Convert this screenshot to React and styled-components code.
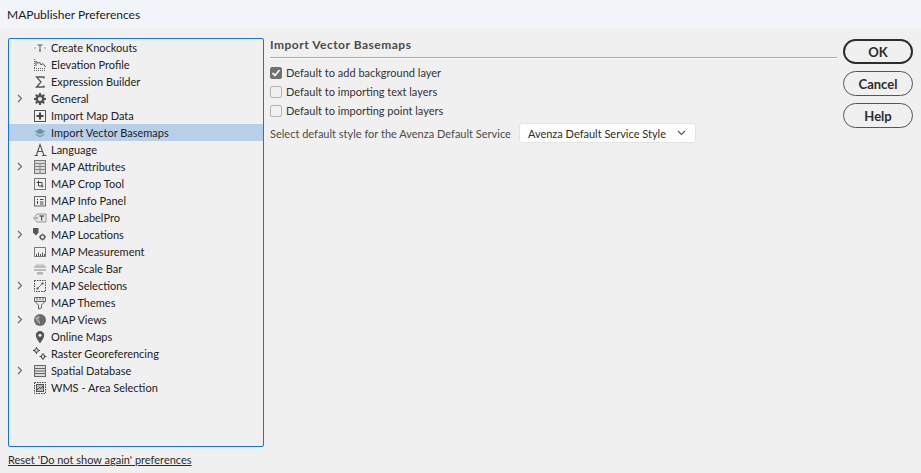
import React from "react"
import styled, { createGlobalStyle } from "styled-components"

const GlobalStyle = createGlobalStyle`
  html, body {
    margin: 0;
    padding: 0;
    background: #f0f0f0;
  }
  body {
    font-family: Lato, Roboto, "Liberation Sans", sans-serif;
    font-size: 11px;
    color: #1f1f1f;
  }
`

const Window = styled.div`
  width: 921px;
  height: 473px;
  display: flex;
  flex-direction: column;
  overflow: hidden;
`
const TitleBar = styled.div`
  height: 28px;
  flex: none;
  display: flex;
  align-items: center;
  padding: 0 0 0 7px;
  background: #f1f5fa;
  font-size: 12px;
  color: #1a1a1a;
`
const Body = styled.div`
  flex: 1;
  display: flex;
  padding: 10px 8px 0;
`
const LeftColumn = styled.div`
  width: 256px;
  flex: none;
  display: flex;
  flex-direction: column;
`
const Tree = styled.ul`
  list-style: none;
  margin: 0;
  padding: 0;
  height: 409px;
  box-sizing: border-box;
  border: 1px solid #1473e6;
  border-radius: 2px;
  background: #f0f0f0;
`
const Row = styled.li`
  height: 17px;
  display: flex;
  align-items: center;
  background: ${props => (props.$selected ? "#b8cfea" : "transparent")};
`
const Chevron = styled.span`
  width: 10px;
  height: 17px;
  margin-left: 6px;
  flex: none;
  display: flex;
  align-items: center;
  justify-content: center;
`
const IconSlot = styled.span`
  width: 14px;
  height: 14px;
  margin-left: 8px;
  margin-right: 4px;
  flex: none;
  display: flex;
`
const RowLabel = styled.span`
  white-space: nowrap;
  line-height: 17px;
  color: #222;
`
const ResetLink = styled.a`
  margin-top: 5px;
  line-height: 16px;
  color: #2b2b2b;
  text-decoration: underline;
  white-space: nowrap;
`
const Panel = styled.div`
  flex: 1;
  margin-left: 6px;
  min-width: 0;
`
const Heading = styled.div`
  height: 19px;
  line-height: 14px;
  font-weight: 700;
  font-size: 12px;
  letter-spacing: 0.5px;
  color: #4b4b4b;
  border-bottom: 1px solid #a8a8a8;
  box-shadow: 0 1px 0 #fff;
`
const CheckRows = styled.div`
  margin-top: 5px;
  display: flex;
  flex-direction: column;
`
const CheckRow = styled.label`
  height: 19px;
  display: flex;
  align-items: center;
  gap: 4px;
  color: #333;
`
const Box = styled.span`
  width: 12px;
  height: 12px;
  box-sizing: border-box;
  flex: none;
  display: flex;
  align-items: center;
  justify-content: center;
  border-radius: 2px;
  border: 1px solid ${props => (props.$checked ? "#707070" : "#b4b4b4")};
  background: ${props => (props.$checked ? "#707070" : "#f0f0f0")};
`
const SelectRow = styled.div`
  margin-top: 3px;
  display: flex;
  align-items: center;
  gap: 8px;
  color: #4b4b4b;
`
const Select = styled.div`
  width: 177px;
  height: 20px;
  flex: none;
  box-sizing: border-box;
  display: flex;
  align-items: center;
  justify-content: space-between;
  padding: 0 9px 0 8px;
  background: #fff;
  border: 1px solid #e4e4e4;
  border-radius: 3px;
  color: #2b2b2b;
  white-space: nowrap;
`
const Buttons = styled.div`
  width: 70px;
  flex: none;
  margin-left: 6px;
  margin-top: 1px;
  display: flex;
  flex-direction: column;
  gap: 7px;
`
const Button = styled.button`
  width: 70px;
  height: 25px;
  padding: 0;
  box-sizing: border-box;
  background: #f0f0f0;
  border: ${props => (props.$primary ? "2px solid #2d2d2d" : "1px solid #555")};
  border-radius: 13px;
  font-family: inherit;
  font-size: 13px;
  font-weight: 700;
  color: #2b2b2b;
`

const Svg = ({ children }) => (
  <svg width="14" height="14" viewBox="0 0 14 14" fill="none" stroke="#666" strokeWidth="1">
    {children}
  </svg>
)

const icons = {
  knockout: (
    <Svg>
      <path d="M4.5 4h5M7 4v6M6 10h2" stroke="#555" />
      <path d="M1 7h2M11 7h2" stroke="#999" />
    </Svg>
  ),
  elevation: (
    <Svg>
      <path d="M1.5 1v9" strokeDasharray="1 1" />
      <path d="M3 8V3l2 2.5L6.500 4 8 7l2-1.500L12.500 9" stroke="#555" />
      <path d="M1 10.500h12M1 12.500h12" strokeDasharray="1 1" />
    </Svg>
  ),
  sigma: (
    <Svg>
      <path d="M11 3.500V2H3.500L8 7l-4.500 5H11v-1.500" stroke="#555" strokeWidth="1.300" />
    </Svg>
  ),
  gear: (
    <Svg>
      <circle cx="7" cy="7" r="3.300" stroke="#555" strokeWidth="2.600" />
      <path d="M7 1v2M7 11v2M1 7h2M11 7h2M2.800 2.800l1.400 1.400M9.800 9.800l1.400 1.400M2.800 11.200l1.400-1.400M9.800 4.200l1.400-1.400" stroke="#555" strokeWidth="2" />
    </Svg>
  ),
  importData: (
    <Svg>
      <rect x="1.500" y="1.500" width="11" height="11" stroke="#555" />
      <path d="M7 3.500v7M3.500 7h7" stroke="#444" strokeWidth="2" />
    </Svg>
  ),
  layers: (
    <Svg>
      <path d="M7 2.500l5 3-5 3-5-3z" fill="#6f8fa8" stroke="none" />
      <path d="M2.500 8l4.500 2.700L11.500 8" stroke="#7f9bb0" strokeWidth="1.400" />
    </Svg>
  ),
  language: (
    <Svg>
      <path d="M1.500 12.500h3.500M9 12.500h4.500M3.300 12.500L7 1.500l4 11M4.500 8.500h5" stroke="#555" strokeWidth="1.100" />
    </Svg>
  ),
  table: (
    <Svg>
      <rect x="1.500" y="0.500" width="11" height="13" fill="#d8d8d8" stroke="#777" />
      <path d="M1.500 3.500h11M1.500 6.500h11M1.500 9.500h11M7 3.500v10" stroke="#888" />
    </Svg>
  ),
  crop: (
    <Svg>
      <rect x="1.500" y="1.500" width="11" height="11" stroke="#777" />
      <path d="M5.500 3.500V9h5M3.500 5.500H9v5" stroke="#444" />
    </Svg>
  ),
  info: (
    <Svg>
      <rect x="1.500" y="2.500" width="11" height="9.500" stroke="#666" />
      <path d="M4.500 5v1M4.500 7v3M7 5.500h3.500M7 8h3.500M7 10h3.500" stroke="#444" />
    </Svg>
  ),
  label: (
    <Svg>
      <path d="M13 3H4L0.500 7 4 11h9z" fill="#e8e8e8" stroke="#999" />
      <path d="M6.500 5h4.500M8.700 5v4.500" stroke="#333" />
      <path d="M2.500 7h2" stroke="#444" />
    </Svg>
  ),
  locations: (
    <Svg>
      <path d="M0 0h5.500v4.500L3 7.500 0 4.500z" fill="#555" stroke="none" />
      <circle cx="9.500" cy="9" r="2.200" stroke="#555" strokeWidth="1.300" />
      <path d="M9.500 5.500v1M9.500 11.500v1M6 9h1M12 9h1" stroke="#555" />
    </Svg>
  ),
  measure: (
    <Svg>
      <path d="M1.500 11.500V2.500h11v9z" stroke="#777" />
      <path d="M3.500 11V9M5.500 11V7.500M7.500 11V9M9.500 11V7.500M11.500 11V9" stroke="#555" />
    </Svg>
  ),
  scale: (
    <Svg>
      <path d="M3 2.500h8l2 2.500v4H1V5z" fill="#bdbdbd" stroke="none" />
      <path d="M1 6.500h12" stroke="#f4f4f4" />
      <path d="M4 10h6v2.500H4z" fill="#b4b4b4" stroke="none" />
    </Svg>
  ),
  selections: (
    <Svg>
      <rect x="1.500" y="1.500" width="11" height="11" strokeDasharray="1.500 1" stroke="#444" />
      <path d="M4.500 9.500l5-5" stroke="#777" />
      <rect x="3.500" y="8.500" width="2" height="2" fill="#555" stroke="none" />
      <rect x="8.500" y="3.500" width="2" height="2" fill="#555" stroke="none" />
    </Svg>
  ),
  themes: (
    <Svg>
      <path d="M1.500 1.500h11v4h-11z" stroke="#666" />
      <path d="M4 1.500v3M7 1.500v3M10 1.500v3" stroke="#666" />
      <path d="M2 5.500L5.500 9v4l3-1V9L12 5.500" stroke="#666" />
    </Svg>
  ),
  globe: (
    <Svg>
      <circle cx="7" cy="7" r="6" fill="#6a6a6a" stroke="none" />
      <path d="M5 2.500l2 2-2 2 2 2v3l-3-3-2-3z" fill="#a4a4a4" stroke="none" />
    </Svg>
  ),
  pin: (
    <Svg>
      <path d="M7 13.500C5 10 2.800 8 2.800 5.200a4.200 4.200 0 018.400 0C11.200 8 9 10 7 13.500z" fill="#555" stroke="none" />
      <circle cx="7" cy="5.200" r="1.500" fill="#f0f0f0" stroke="none" />
    </Svg>
  ),
  raster: (
    <Svg>
      <circle cx="3.500" cy="3.500" r="1.800" stroke="#444" strokeWidth="1.100" />
      <circle cx="10" cy="9.500" r="1.800" stroke="#444" strokeWidth="1.100" />
      <path d="M3.500 0v1.500M0 3.500h1.500M3.500 5.500V7M5.500 3.500H7M10 6v1.500M13.500 9.500H12M10 11.500V13M6.500 9.500H8" stroke="#444" />
    </Svg>
  ),
  database: (
    <Svg>
      <rect x="1.500" y="1.500" width="11" height="11" fill="#dcdcdc" stroke="#666" />
      <path d="M1.500 4.500h11M1.500 7h11M1.500 9.500h11" stroke="#666" />
    </Svg>
  ),
  wms: (
    <Svg>
      <rect x="1.500" y="1.500" width="11" height="11" strokeDasharray="1.500 1" stroke="#444" />
      <rect x="3.500" y="3.500" width="7" height="7" fill="#bbb" stroke="#555" />
      <path d="M4 9l2.500-2.500 1.500 1L10 5" stroke="#444" />
    </Svg>
  ),
}

const items = [
  { label: "Create Knockouts", icon: "knockout" },
  { label: "Elevation Profile", icon: "elevation" },
  { label: "Expression Builder", icon: "sigma" },
  { label: "General", icon: "gear", expandable: true },
  { label: "Import Map Data", icon: "importData" },
  { label: "Import Vector Basemaps", icon: "layers", selected: true },
  { label: "Language", icon: "language" },
  { label: "MAP Attributes", icon: "table", expandable: true },
  { label: "MAP Crop Tool", icon: "crop" },
  { label: "MAP Info Panel", icon: "info" },
  { label: "MAP LabelPro", icon: "label" },
  { label: "MAP Locations", icon: "locations", expandable: true },
  { label: "MAP Measurement", icon: "measure" },
  { label: "MAP Scale Bar", icon: "scale" },
  { label: "MAP Selections", icon: "selections", expandable: true },
  { label: "MAP Themes", icon: "themes" },
  { label: "MAP Views", icon: "globe", expandable: true },
  { label: "Online Maps", icon: "pin" },
  { label: "Raster Georeferencing", icon: "raster" },
  { label: "Spatial Database", icon: "database", expandable: true },
  { label: "WMS - Area Selection", icon: "wms" },
]

const checks = [
  { label: "Default to add background layer", checked: true },
  { label: "Default to importing text layers" },
  { label: "Default to importing point layers" },
]

const App = () => (
  <Window>
    <GlobalStyle />
    <TitleBar>MAPublisher Preferences</TitleBar>
    <Body>
      <LeftColumn>
        <Tree>
          {items.map(item => (
            <Row key={item.label} $selected={item.selected}>
              <Chevron>
                {item.expandable && (
                  <svg width="6" height="9" viewBox="0 0 6 9" fill="none" stroke="#666" strokeWidth="1.100">
                    <path d="M1 1l3.500 3.500L1 8" />
                  </svg>
                )}
              </Chevron>
              <IconSlot>{icons[item.icon]}</IconSlot>
              <RowLabel>{item.label}</RowLabel>
            </Row>
          ))}
        </Tree>
        <ResetLink href="#">Reset 'Do not show again' preferences</ResetLink>
      </LeftColumn>
      <Panel>
        <Heading>Import Vector Basemaps</Heading>
        <CheckRows>
          {checks.map(check => (
            <CheckRow key={check.label}>
              <Box $checked={check.checked}>
                {check.checked && (
                  <svg width="10" height="10" viewBox="0 0 10 10" fill="none" stroke="#f4f4f4" strokeWidth="1.800">
                    <path d="M1.500 5l2.500 2.500L8.500 2" />
                  </svg>
                )}
              </Box>
              {check.label}
            </CheckRow>
          ))}
        </CheckRows>
        <SelectRow>
          Select default style for the Avenza Default Service
          <Select>
            Avenza Default Service Style
            <svg width="9" height="6" viewBox="0 0 9 6" fill="none" stroke="#555" strokeWidth="1.100">
              <path d="M1 1l3.500 3.500L8 1" />
            </svg>
          </Select>
        </SelectRow>
      </Panel>
      <Buttons>
        <Button $primary>OK</Button>
        <Button>Cancel</Button>
        <Button>Help</Button>
      </Buttons>
    </Body>
  </Window>
)

export default App
